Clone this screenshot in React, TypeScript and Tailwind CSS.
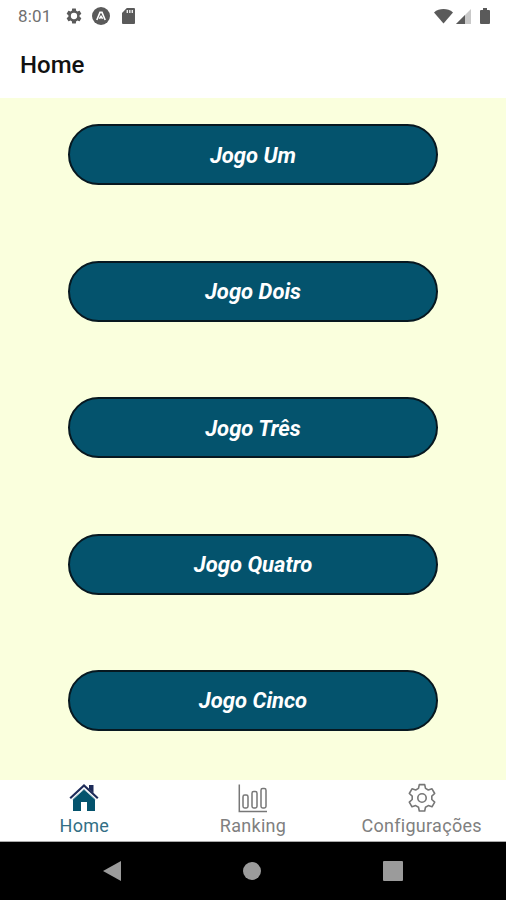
const GAMES = ['Jogo Um', 'Jogo Dois', 'Jogo Três', 'Jogo Quatro', 'Jogo Cinco'];

const GEAR =
  'M19.43 12.98c.04-.32.07-.64.07-.98s-.03-.66-.07-.98l2.11-1.65c.19-.15.24-.42.12-.64l-2-3.46c-.12-.22-.39-.3-.61-.22l-2.49 1c-.52-.4-1.08-.73-1.69-.98l-.38-2.65C14.46 2.18 14.25 2 14 2h-4c-.25 0-.46.18-.49.42l-.38 2.65c-.61.25-1.17.59-1.69.98l-2.49-1c-.23-.09-.49 0-.61.22l-2 3.46c-.13.22-.07.49.12.64l2.11 1.65c-.04.32-.07.65-.07.98s.03.66.07.98l-2.11 1.65c-.19.15-.24.42-.12.64l2 3.46c.12.22.39.3.61.22l2.49-1c.52.4 1.08.73 1.69.98l.38 2.65c.03.24.24.42.49.42h4c.25 0 .46-.18.49-.42l.38-2.65c.61-.25 1.17-.59 1.69-.98l2.49 1c.23.09.49 0 .61-.22l2-3.46c.12-.22.07-.49-.12-.64l-2.11-1.65zM12 16.2a4.2 4.2 0 1 1 0-8.4 4.2 4.2 0 0 1 0 8.4z';

function StatusBar() {
  return (
    <div className="flex h-8 shrink-0 items-center justify-between pl-[18px] pr-4 text-[#5a5a5a]">
      <div className="flex items-center">
        <span className="w-[47px] text-[17px] leading-8 tracking-[0.2px] text-[#707070]">8:01</span>
        <svg className="h-[18px] w-[18px]" viewBox="0 0 24 24" fill="currentColor">
          <path d={GEAR} fillRule="evenodd" />
        </svg>
        <svg className="ml-[9px] h-[18px] w-[18px]" viewBox="0 0 18 18">
          <circle cx="9" cy="9" r="9" fill="currentColor" />
          <path d="M4.8 13 8 5.4h2L13.2 13M7.4 11.8 9 9.4l1.6 2.4" fill="none" stroke="#fff" strokeWidth="1.6" />
        </svg>
        <svg className="ml-3 h-4 w-[13px]" viewBox="0 0 13 16">
          <path d="M4.8 0H12q1 0 1 1v14q0 1-1 1H1q-1 0-1-1V5z" fill="currentColor" />
          <path d="M5.3 2v3M7.8 2v3M10.3 2v3" stroke="#eee" strokeWidth="1.4" />
        </svg>
      </div>
      <div className="flex items-center">
        <svg className="h-[15px] w-[19px]" viewBox="0 0 19 15">
          <path d="M0 3.4C5.4-1 13.6-1 19 3.4L9.5 14.5z" fill="currentColor" />
        </svg>
        <svg className="ml-[3px] h-[15px] w-[15px]" viewBox="0 0 15 15">
          <path d="M0 15 15 0v15z" fill="#c9c9c9" />
          <path d="M0 15 9 6v9z" fill="currentColor" />
        </svg>
        <svg className="ml-[9px] h-4 w-[10px]" viewBox="0 0 10 16">
          <path d="M3 0h4v2h2q1 0 1 1v12q0 1-1 1H1q-1 0-1-1V3q0-1 1-1h2z" fill="currentColor" />
        </svg>
      </div>
    </div>
  );
}

function HomeIcon() {
  return (
    <svg className="h-[30px] w-[30px]" viewBox="0 0 30 30">
      <path d="M4 16 15 6l11 10v12h-8v-9h-6v9H4z" fill="#04536d" />
      <path d="M20 2h4.5v8L20 6z" fill="#1d2b59" />
      <path d="M1.2 15.2 15 2.5l13.8 12.7" fill="none" stroke="#1d2b59" strokeWidth="2.2" />
      <path d="M3.4 16.8 15 6.3l11.6 10.5" fill="none" stroke="#b7ced8" strokeWidth=".9" />
    </svg>
  );
}

function ChartIcon() {
  return (
    <svg className="h-[30px] w-[30px]" viewBox="0 0 30 30" fill="none" stroke="#777" strokeWidth="1.5">
      <path d="M1.3 1.5v27H29" />
      <rect x="5" y="12" width="5" height="13" rx="1.7" />
      <rect x="14" y="8.5" width="5" height="16.5" rx="1.7" />
      <rect x="23" y="5.5" width="5" height="19.5" rx="1.7" />
    </svg>
  );
}

function SettingsIcon() {
  return (
    <svg className="h-[30px] w-[30px]" viewBox="0 0 30 30" fill="none" stroke="#777" strokeWidth="1.6" strokeLinejoin="round">
      <path d="m12.3 1.6h5.4l.8 3.8 2.8 1.6 3.7-1.2 2.7 4.7-2.9 2.6v3.4l2.9 2.6-2.7 4.7-3.7-1.2-2.8 1.6-.8 3.8h-5.4l-.8-3.8-2.8-1.6L5 23.8l-2.7-4.7 2.9-2.6v-3.4l-2.9-2.6L5 5.8 8.700 7l2.800-1.600z" />
      <circle cx="15" cy="15" r="4.200" />
    </svg>
  );
}

const TABS = [
  { label: 'Home', Icon: HomeIcon, color: 'text-[#336f85]' },
  { label: 'Ranking', Icon: ChartIcon, color: 'text-[#808080]' },
  { label: 'Configurações', Icon: SettingsIcon, color: 'text-[#808080]' },
];

export default function App() {
  return (
    <div className="flex h-[900px] w-[506px] flex-col overflow-hidden bg-white font-[Roboto,sans-serif]">
      <StatusBar />
      <header className="flex h-[66px] shrink-0 items-center pl-5">
        <h1 className="text-[24px] font-medium leading-[66px] text-[#111]">Home</h1>
      </header>
      <main className="flex h-[682px] shrink-0 flex-col items-center gap-[75.4px] bg-[#faffdd] pt-[26.4px]">
        {GAMES.map((game) => (
          <button
            key={game}
            className="flex h-[61px] w-[370px] shrink-0 items-center justify-center rounded-full border-2 border-[#071820] bg-[#04536d] pt-px text-[22px] font-bold italic text-white"
          >
            {game}
          </button>
        ))}
      </main>
      <nav className="grid h-[62px] shrink-0 grid-cols-3 border-b border-[#aaa] pt-[3px]">
        {TABS.map(({ label, Icon, color }) => (
          <div key={label} className="flex flex-col items-center">
            <Icon />
            <span className={`text-[18px] leading-[26px] tracking-[0.3px] ${color}`}>{label}</span>
          </div>
        ))}
      </nav>
      <footer className="flex flex-1 items-start justify-between bg-black pl-[103px] pr-[103px] pt-[19px]">
        <svg className="h-5 w-[18px]" viewBox="0 0 18 20">
          <path d="M0 10 18 0v20z" fill="#9b9b9b" />
        </svg>
        <div className="mt-px h-[18px] w-[18px] rounded-full bg-[#9b9b9b]" />
        <div className="h-5 w-5 rounded-[1px] bg-[#9b9b9b]" />
      </footer>
    </div>
  );
}
